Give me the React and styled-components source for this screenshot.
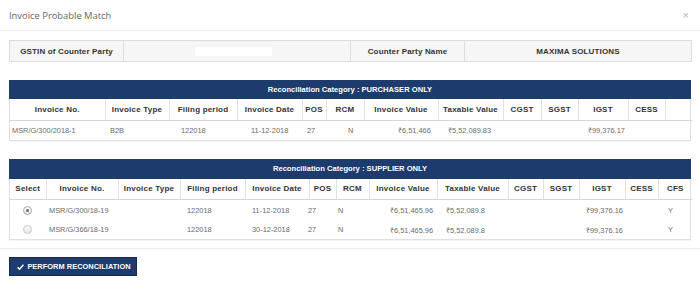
import React from "react";
import styled, { createGlobalStyle } from "styled-components";

const GlobalStyle = createGlobalStyle`
  html, body { margin: 0; padding: 0; background: #fff; }
  body { font-family: "Liberation Sans", Arial, sans-serif; }
  * { box-sizing: border-box; }
`;

const Modal = styled.div`
  width: 700px;
  background: #fff;
`;

const Header = styled.div`
  height: 31px;
  padding: 0 9px;
  display: flex;
  align-items: center;
  justify-content: space-between;
  border-bottom: 1px solid #ebebeb;
`;

const Title = styled.h4`
  margin: 0;
  font-family: "Open Sans", "Noto Sans", sans-serif;
  font-weight: 400;
  font-size: 9.4px;
  color: #666;
  letter-spacing: 0;
`;

const Close = styled.button`
  border: 0;
  background: none;
  padding: 0;
  margin-right: 2px;
  font-family: "Liberation Sans", sans-serif;
  font-size: 11px;
  line-height: 1;
  color: #b5b5b5;
  cursor: pointer;
`;

const Body = styled.div`
  padding: 9px 9px 8px;
  display: flex;
  flex-direction: column;
  gap: 18px;
  border-bottom: 1px solid #ebebeb;
`;

const InfoTable = styled.table`
  width: 100%;
  border-collapse: collapse;
  table-layout: fixed;
  background: #f6f6f6;
  border: 1px solid #dcdcdc;
`;

const InfoCell = styled.td`
  height: 21px;
  padding: 0 4px;
  border: 1px solid #dcdcdc;
  text-align: center;
  font-size: 8px;
  font-weight: 700;
  color: #333;
  letter-spacing: 0.15px;
`;

const Redacted = styled.span`
  display: inline-block;
  width: 77px;
  height: 9px;
  background: #fff;
  vertical-align: middle;
  margin-left: -8px;
`;

const Panel = styled.section`
  border: 1px solid #e0e0e0;
  border-top: 0;
  box-shadow: 0 1px 1px rgba(0, 0, 0, 0.04);
`;

const Caption = styled.div`
  height: ${(p) => p.$h}px;
  margin: 0 -1px;
  background: #1d3b6c;
  color: #fff;
  font-size: 7.6px;
  font-weight: 700;
  letter-spacing: 0;
  display: flex;
  align-items: center;
  justify-content: center;
`;

const GridTable = styled.table`
  width: 100%;
  border-collapse: collapse;
  table-layout: fixed;
`;

const HeadCell = styled.th`
  height: 21px;
  padding: 0 2px;
  border-left: 1px solid #e2e2e2;
  border-bottom: 1px solid #d6d6d6;
  font-size: 8px;
  font-weight: 700;
  color: #333;
  text-align: center;
  white-space: nowrap;
  letter-spacing: 0.2px;
  &:first-child { border-left: 0; }
`;

const Cell = styled.td`
  height: ${(p) => p.$h || 20}px;
  padding: 0 0 0 5px;
  font-size: 7.4px;
  color: #6a6a6a;
  white-space: nowrap;
  text-align: ${(p) => (p.$center ? "center" : "left")};
  &:first-child { padding-left: ${(p) => (p.$center ? 0 : 2)}px; }
`;

const Radio = styled.span`
  display: inline-block;
  width: 9px;
  height: 9px;
  border-radius: 50%;
  border: 1px solid ${(p) => (p.$checked ? "#a9a9a9" : "#c9c9c9")};
  background: linear-gradient(#fbfbfb, #e6e6e6);
  position: relative;
  vertical-align: middle;
  &::after {
    content: "";
    display: ${(p) => (p.$checked ? "block" : "none")};
    position: absolute;
    left: 2px;
    top: 2px;
    width: 3px;
    height: 3px;
    border-radius: 50%;
    background: #6b6b6b;
  }
`;

const Footer = styled.div`
  padding: 8px 9px;
`;

const Button = styled.button`
  width: 128px;
  height: 19px;
  padding: 0 0 0 2px;
  border: 1px solid #13294f;
  background: #1d3b6c;
  color: #fff;
  font-family: "Liberation Sans", Arial, sans-serif;
  font-size: 7.4px;
  font-weight: 700;
  letter-spacing: 0.05px;
  display: flex;
  align-items: center;
  justify-content: center;
  gap: 3px;
  cursor: pointer;
`;

const Check = () => (
  <svg width="7" height="6" viewBox="0 0 14 12" aria-hidden="true">
    <path d="M1 6.5 L5 10.5 L13 1.5" fill="none" stroke="#fff" strokeWidth="2.8" />
  </svg>
);

const Cols = ({ widths }) => (
  <colgroup>
    {widths.map((w, i) => (
      <col key={i} style={{ width: w }} />
    ))}
  </colgroup>
);

const head1 = ["Invoice No.", "Invoice Type", "Filing period", "Invoice Date", "POS", "RCM", "Invoice Value", "Taxable Value", "CGST", "SGST", "IGST", "CESS", ""];
const head1W = [95, 64, 68, 65, 24, 38, 74, 65, 38, 37, 50, 37, 27];
const body1W = [95, 71, 70, 56, 41, 50, 50, 70, 35, 35, 50, 32, 27];
const rows1 = [["MSR/G/300/2018-1", "B2B", "122018", "11-12-2018", "27", "N", "₹6,51,466", "₹5,52,089.83", "", "", "₹99,376.17", "", ""]];

const head2 = ["Select", "Invoice No.", "Invoice Type", "Filing period", "Invoice Date", "POS", "RCM", "Invoice Value", "Taxable Value", "CGST", "SGST", "IGST", "CESS", "CFS"];
const head2W = [36, 72, 62, 65, 64, 27, 33, 68, 71, 35, 36, 46, 33, 34];
const body2W = [34, 77, 61, 65, 56, 30, 52, 56, 70, 35, 35, 50, 32, 29];
const rows2 = [
  { checked: true, cells: ["MSR/G/300/18-19", "", "122018", "11-12-2018", "27", "N", "₹6,51,465.96", "₹5,52,089.8", "", "", "₹99,376.16", "", "Y"] },
  { checked: false, cells: ["MSR/G/366/18-19", "", "122018", "30-12-2018", "27", "N", "₹6,51,465.96", "₹5,52,089.8", "", "", "₹99,376.16", "", "Y"] },
];

export default function App() {
  return (
    <Modal>
      <GlobalStyle />
      <Header>
        <Title>Invoice Probable Match</Title>
        <Close aria-label="Close">×</Close>
      </Header>
      <Body>
        <InfoTable>
          <colgroup>
            <col style={{ width: 114 }} />
            <col style={{ width: 227 }} />
            <col style={{ width: 114 }} />
            <col style={{ width: 227 }} />
          </colgroup>
          <tbody>
            <tr>
              <InfoCell>GSTIN of Counter Party</InfoCell>
              <InfoCell><Redacted /></InfoCell>
              <InfoCell>Counter Party Name</InfoCell>
              <InfoCell>MAXIMA SOLUTIONS</InfoCell>
            </tr>
          </tbody>
        </InfoTable>

        <Panel>
          <Caption $h={19}>Reconciliation Category : PURCHASER ONLY</Caption>
          <GridTable>
            <Cols widths={head1W} />
            <thead>
              <tr>
                {head1.map((h, i) => (
                  <HeadCell key={i}>{h}</HeadCell>
                ))}
              </tr>
            </thead>
          </GridTable>
          <GridTable>
            <Cols widths={body1W} />
            <tbody>
              {rows1.map((r, ri) => (
                <tr key={ri}>
                  {r.map((c, ci) => (
                    <Cell key={ci} $h={19}>{c}</Cell>
                  ))}
                </tr>
              ))}
            </tbody>
          </GridTable>
        </Panel>

        <Panel>
          <Caption $h={20}>Reconciliation Category : SUPPLIER ONLY</Caption>
          <GridTable>
            <Cols widths={head2W} />
            <thead>
              <tr>
                {head2.map((h, i) => (
                  <HeadCell key={i}>{h}</HeadCell>
                ))}
              </tr>
            </thead>
          </GridTable>
          <GridTable>
            <Cols widths={body2W} />
            <tbody>
              {rows2.map((r, ri) => (
                <tr key={ri}>
                  <Cell $center $h={ri === 0 ? 20 : 19}>
                    <Radio $checked={r.checked} />
                  </Cell>
                  {r.cells.map((c, ci) => (
                    <Cell key={ci} $h={ri === 0 ? 20 : 19}>{c}</Cell>
                  ))}
                </tr>
              ))}
            </tbody>
          </GridTable>
        </Panel>
      </Body>
      <Footer>
        <Button>
          <Check />
          PERFORM RECONCILIATION
        </Button>
      </Footer>
    </Modal>
  );
}
